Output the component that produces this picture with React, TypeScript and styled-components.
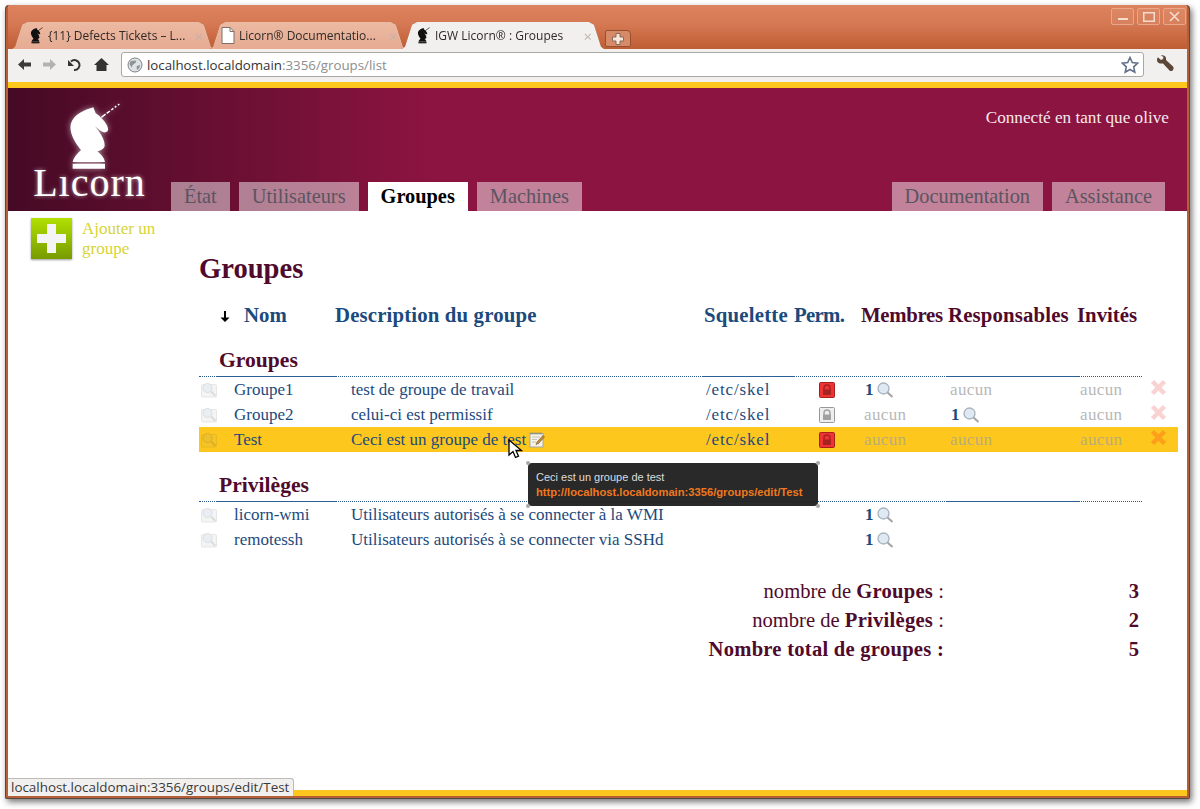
import React from "react";
import styled, { createGlobalStyle } from "styled-components";

const Global = createGlobalStyle`
  html, body { margin: 0; padding: 0; background: #fff; height: 100%; overflow: hidden; }
  body { font-family: "Liberation Serif", serif; }
`;

const SERIF = `"Liberation Serif", "Times New Roman", serif`;
const UI = `"Open Sans", "Noto Sans", sans-serif`;
const BLUE = "#1b4a7d";
const MAROON = "#4f0a2c";
const HL = "#fec71d";

const Screen = styled.div`
  width: 1200px;
  height: 809px;
  padding: 5px 10px 10px 5px;
  box-sizing: border-box;
`;
const Window = styled.div`
  position: relative;
  height: 794px;
  box-sizing: border-box;
  display: flex;
  flex-direction: column;
  border: 3px solid #b55f38;
  border-top: 0;
  border-radius: 4px 4px 2px 2px;
  outline: 1px solid #5b4a42;
  outline-offset: -1px;
  box-shadow: 2px 3px 6px rgba(0, 0, 0, 0.55);
  overflow: hidden;
`;
const TitleBar = styled.div`
  height: 44px;
  flex: none;
  display: flex;
  align-items: flex-end;
  padding-left: 4px;
  position: relative;
  background: linear-gradient(#dc825c 0%, #d67a55 40%, #bf5d34 100%);
`;
const Tab = styled.div<{ $w: number; $pad: number; $active?: boolean }>`
  position: relative;
  width: ${(p) => p.$w}px;
  height: 27px;
  margin-right: -4px;
  display: flex;
  align-items: center;
  padding: 0 0 0 ${(p) => p.$pad}px;
  box-sizing: border-box;
  font: 12px/27px ${UI};
  color: #2f2a26;
  z-index: ${(p) => (p.$active ? 2 : 1)};
  filter: drop-shadow(0 0 0.6px #7d4326);
  &::before {
    content: "";
    position: absolute;
    inset: 0;
    z-index: -1;
    background: ${(p) => (p.$active ? "#f2f0ee" : "linear-gradient(#ecb9a2, #e6ab92)")};
    clip-path: polygon(0 100%, 3px 92%, 10px 10%, 15px 0, calc(100% - 15px) 0, calc(100% - 10px) 10%, calc(100% - 3px) 92%, 100% 100%);
  }
`;
const TabText = styled.span`
  flex: 1;
  margin-left: 4px;
  white-space: nowrap;
  overflow: hidden;
`;
const TabClose = styled.span<{ $right: number }>`
  flex: none;
  padding-right: ${(p) => p.$right}px;
  color: #c4b3aa;
  font: 15px ${UI};
`;
const NewTab = styled.div`
  width: 26px;
  height: 17px;
  margin: 0 0 2px 5px;
  display: flex;
  align-items: center;
  justify-content: center;
  border-radius: 2px 4px 2px 2px;
  background: #d68a68;
  border: 1px solid #96512f;
  box-sizing: border-box;
`;
const WinButtons = styled.div`
  position: absolute;
  top: 3px;
  right: 1px;
  display: flex;
  gap: 3px;
`;
const WinButton = styled.div`
  width: 23px;
  height: 17px;
  box-sizing: border-box;
  border: 1px solid #e9a78a;
  border-radius: 2px;
  background: rgba(255, 255, 255, 0.06);
  display: flex;
  align-items: center;
  justify-content: center;
`;
const Toolbar = styled.div`
  height: 33px;
  flex: none;
  background: #f2f0ee;
  display: flex;
  align-items: flex-start;
  padding: 3px 0 0 0;
  box-sizing: border-box;
  border-radius: 3px 3px 0 0;
`;
const NavIcons = styled.div`
  width: 113px;
  flex: none;
  display: flex;
  align-items: center;
  height: 25px;
  padding-left: 10px;
  box-sizing: border-box;
  gap: 12px;
`;
const Omnibox = styled.div`
  width: 1023px;
  height: 25px;
  flex: none;
  box-sizing: border-box;
  border: 1px solid #aaa8a4;
  border-radius: 3px;
  background: #fff;
  display: flex;
  align-items: center;
  padding: 0 4px 0 5px;
  font: 13.3px ${UI};
  color: #8d8d8d;
`;
const UrlHost = styled.span`
  color: #333;
`;
const UrlText = styled.span`
  flex: 1;
  margin-left: 4px;
`;
const Wrench = styled.div`
  margin-left: 12px;
  margin-top: 3px;
`;
const YellowBar = styled.div`
  height: 6px;
  flex: none;
  background: ${HL};
`;
const Header = styled.header`
  height: 123px;
  flex: none;
  display: flex;
  background: linear-gradient(90deg, #450a25 0%, #8c1440 36%, #8c1440 100%);
`;
const Logo = styled.div`
  width: 163px;
  flex: none;
  display: flex;
  flex-direction: column;
  align-items: center;
  padding: 10px 0 0 0;
  box-sizing: border-box;
  svg { filter: drop-shadow(0 0 3px rgba(255, 255, 255, 0.55)); margin-left: 11px; }
`;
const LogoText = styled.div`
  font: 40px/32px ${SERIF};
  color: #fff;
  letter-spacing: 1px;
  margin-top: -7px;
  text-shadow: 0 0 4px rgba(255, 255, 255, 0.6);
`;
const HeaderRight = styled.div`
  flex: 1;
  display: flex;
  flex-direction: column;
  justify-content: space-between;
`;
const UserLine = styled.div`
  text-align: right;
  padding: 20px 18px 0 0;
  font: 17.2px/20px ${SERIF};
  color: #f7e8ee;
`;
const Nav = styled.nav`
  display: flex;
  justify-content: space-between;
  padding-right: 22px;
`;
const NavGroup = styled.div`
  display: flex;
  gap: 9px;
`;
const NavTab = styled.div<{ $active?: boolean }>`
  height: 29px;
  padding: 0 13px;
  font: ${(p) => (p.$active ? 700 : 400)} 20.35px/29px ${SERIF};
  color: ${(p) => (p.$active ? "#000" : "#5a5560")};
  background: ${(p) => (p.$active ? "#fff" : "rgba(255,255,255,0.47)")};
`;
const Body = styled.div`
  flex: 1;
  display: flex;
  background: #fff;
  min-height: 0;
`;
const Sidebar = styled.aside`
  width: 191px;
  flex: none;
  display: flex;
  align-items: flex-start;
  gap: 10px;
  padding: 7px 0 0 23px;
  box-sizing: border-box;
`;
const AddText = styled.div`
  font: 17px/20px ${SERIF};
  color: #d6d435;
  width: 90px;
  margin-top: 1px;
`;
const Main = styled.main`
  flex: 1;
  min-width: 0;
`;
const Title = styled.h1`
  margin: 43px 0 0 0;
  font: 700 28.6px/30px ${SERIF};
  color: ${MAROON};
`;
const HeadRow = styled.div`
  display: grid;
  grid-template-columns: 45px 91px 369px 90px 67px 87px 129px 90px;
  margin-top: 19px;
  height: 24px;
  align-items: center;
  font: 700 20.8px/24px ${SERIF};
  white-space: nowrap;
`;
const HeadCell = styled.div<{ $maroon?: boolean; $ls?: number }>`
  color: ${(p) => (p.$maroon ? MAROON : BLUE)};
  letter-spacing: ${(p) => p.$ls ?? 0}px;
  display: flex;
  align-items: center;
`;
const ArrowBox = styled.div`
  padding-left: 21px;
`;
const SectionTitle = styled.h2`
  margin: 18px 0 0 20px;
  font: 700 21.6px/30px ${SERIF};
  color: ${MAROON};
`;
const Rule = styled.div`
  display: grid;
  grid-template-columns: 18px 119px 367px 91px 153px 131px 64px;
  width: 943px;
  margin-top: 1px;
`;
const RuleCell = styled.div<{ $solid?: boolean }>`
  border-bottom: 1px ${(p) => (p.$solid ? "solid #2a6199" : "dotted #2a5a8c")};
`;
const Row = styled.div<{ $hl?: boolean }>`
  position: relative;
  display: grid;
  grid-template-columns: 35px 117px 355px 113px 45px 86px 130px 70px 28px;
  width: 979px;
  height: 25px;
  align-items: center;
  background: ${(p) => (p.$hl ? HL : "transparent")};
  font: 17px/25px ${SERIF};
  color: ${BLUE};
  white-space: nowrap;
`;
const Cell = styled.div`
  display: flex;
  align-items: center;
  gap: 3px;
  min-width: 0;
`;
const IconCell = styled(Cell)`
  padding-left: 2px;
`;
const PathCell = styled(Cell)`
  letter-spacing: 0.85px;
`;
const None = styled.span<{ $hl?: boolean }>`
  color: ${(p) => (p.$hl ? "#b9ad7a" : "#b8b8b8")};
  letter-spacing: 0.35px;
`;
const Count = styled.b`
  color: ${BLUE};
  margin-left: 1px;
`;
const Tooltip = styled.div`
  position: absolute;
  left: 329px;
  top: 36px;
  width: 290px;
  height: 43px;
  box-sizing: border-box;
  padding: 7px 8px;
  border-radius: 4px;
  background: rgba(32, 32, 32, 0.96);
  font: 11px/15px "Liberation Sans", Arial, sans-serif;
  color: #ddd;
  z-index: 5;
`;
const TooltipLink = styled.div`
  font-size: 11.2px;
  font-weight: 700;
  color: #f0781e;
`;
const Dot = styled.i<{ $x: "left" | "right"; $y: "top" | "bottom" }>`
  position: absolute;
  ${(p) => p.$x}: -2px;
  ${(p) => p.$y}: -2px;
  width: 4px;
  height: 4px;
  border-radius: 50%;
  background: #a8a8a8;
`;
const Cursor = styled.svg`
  position: absolute;
  left: 309px;
  top: 12px;
  z-index: 6;
`;
const Stats = styled.div`
  display: grid;
  grid-template-columns: 745px 195px;
  margin-top: 25px;
  font: 20.6px/29px ${SERIF};
  color: ${MAROON};
  b { letter-spacing: 0.25px; }
`;
const StatLabel = styled.div`
  text-align: right;
`;
const StatValue = styled.div`
  text-align: right;
  font-weight: 700;
`;
const StatusBubble = styled.div`
  position: absolute;
  left: 0;
  bottom: 0;
  height: 17px;
  padding: 0 4px 0 3px;
  background: #f2f0ee;
  border-top: 1px solid #bdbbb8;
  border-right: 1px solid #bdbbb8;
  border-radius: 0 3px 0 0;
  font: 13.4px/17px ${UI};
  color: #3a3a3a;
  z-index: 7;
`;
const BottomBar = styled.div`
  height: 6px;
  flex: none;
  background: ${HL};
`;

const KNIGHT =
  "M100 28 C78 34 42 48 33 76 C26 100 42 130 63 156 C50 168 40 180 38 192 L135 192 C133 180 124 170 112 160 C122 158 134 152 134 142 C134 122 118 100 104 84 C114 92 128 106 137 103 C146 100 146 92 140 80 C132 68 122 56 107 46 Z";
const BASE = "M38 197 H135 V212 H38 Z";

const Knight = () => (
  <svg width="14" height="17" viewBox="25 15 160 205" style={{ flex: "none" }}>
    <path d={KNIGHT} fill="#111" />
    <path d={BASE} fill="#111" />
    <path d="M122 58 L172 22" stroke="#111" strokeWidth="8" />
  </svg>
);

const LogoKnight = () => (
  <svg width="70" height="76" viewBox="0 0 210 228">
    <path d={KNIGHT} fill="#fff" />
    <path d={BASE} fill="#fff" />
    <path d="M124 58 L178 18" stroke="#fff" strokeWidth="4.500" strokeDasharray="16 4 12 5 8 5 6 6" />
  </svg>
);

const PageIcon = () => (
  <svg width="14" height="17" viewBox="0 0 14 17" style={{ flex: "none" }}>
    <path d="M1 .5h8l4 4v12H1z" fill="#fff" stroke="#7a7068" />
    <path d="M9 .5v4h4" fill="none" stroke="#7a7068" />
  </svg>
);

const Back = () => (
  <svg width="13" height="11" viewBox="0 0 13 11">
    <path d="M0 5.500L6 0v3.500h7v4H6V11z" fill="#3a3a3a" />
  </svg>
);
const Forward = () => (
  <svg width="13" height="11" viewBox="0 0 13 11">
    <path d="M13 5.500L7 0v3.500H0v4h7V11z" fill="#b4b2ae" />
  </svg>
);
const Reload = () => (
  <svg width="14" height="14" viewBox="0 0 14 14" fill="none">
    <path d="M3 3.500A5 5 0 1 1 6 12" stroke="#333" strokeWidth="2" />
    <path d="M0 2v6h6z" fill="#333" />
  </svg>
);
const Home = () => (
  <svg width="15" height="13" viewBox="0 0 15 13">
    <path d="M7.500 0l7.500 7h-2.500v6h-10V7H0z" fill="#333" />
  </svg>
);
const Globe = () => (
  <svg width="16" height="16" viewBox="0 0 16 16" style={{ flex: "none" }}>
    <circle cx="8" cy="8" r="7" fill="#dfe3e4" stroke="#7d8385" />
    <path d="M4 4c2 0 4-1 5 0s-1 2-2 3-2 1-2 3-1-1-2-2 0-3 1-4zM10 9l3-1c0 2-1 4-3 5 0-2-1-3 0-4z" fill="#8d9496" />
  </svg>
);
const Star = () => (
  <svg width="18" height="18" viewBox="0 0 18 18">
    <path d="M9 1.500l2.300 5 5.400.6-4 3.700 1.100 5.400L9 13.500l-4.800 2.700 1.100-5.400-4-3.700 5.400-.6z" fill="#fff" stroke="#63708a" strokeWidth="1.600" />
  </svg>
);
const WrenchIcon = () => (
  <svg width="18" height="18" viewBox="0 0 18 18">
    <path d="M1 5c0-1 .3-2 .8-2.700L5 5l2-1 .5-2L5 .5C7-.3 9.500 .8 10 3c.2 1 0 1.500 0 2l7 6.500c1 1.200.5 2.500 0 3.500s-2.500 1.500-3.500.5L7 8.500C4 9 1 8 1 5z" fill="#5b4638" />
  </svg>
);
const Plus = () => (
  <svg width="41" height="41" viewBox="0 0 41 41" style={{ flex: "none", filter: "drop-shadow(0 1px 1px rgba(0,0,0,.4))" }}>
    <defs>
      <linearGradient id="pg" x1="0" y1="0" x2="0" y2="1">
        <stop offset="0" stopColor="#b2e000" />
        <stop offset="1" stopColor="#779a00" />
      </linearGradient>
    </defs>
    <rect width="41" height="41" fill="url(#pg)" />
    <path d="M16 6h9v10h10v9H25v10h-9V25H6v-9h10z" fill="#f4f4f4" />
  </svg>
);
const DownArrow = () => (
  <svg width="10" height="11" viewBox="0 0 10 11">
    <path d="M4 0h2v6.500h3.500L5 11 .5 6.500H4z" fill="#000" />
  </svg>
);
const GroupIcon = ({ hl }: { hl?: boolean }) => (
  <svg width="16" height="16" viewBox="0 0 16 16" style={{ flex: "none" }}>
    <rect x=".5" y="2.500" width="15" height="12.500" rx="1" fill={hl ? "#f4c326" : "#f4f4f4"} stroke={hl ? "#e8b920" : "#e6e6e6"} />
    <circle cx="6.500" cy="6" r="4.500" fill={hl ? "#edc030" : "#e9eef4"} stroke={hl ? "#dcae24" : "#dcdfe2"} />
    <path d="M10 9.500l4.500 4.500" stroke={hl ? "#dcae24" : "#dcdcdc"} strokeWidth="2" />
  </svg>
);
const Lens = () => (
  <svg width="17" height="16" viewBox="0 0 17 16" style={{ flex: "none" }}>
    <circle cx="6.500" cy="6.500" r="5.500" fill="#dfe9f3" stroke="#a8b2bb" strokeWidth="1.300" />
    <path d="M10.500 10.500l5 4.500" stroke="#a6a6a6" strokeWidth="2.200" />
  </svg>
);
const Lock = ({ red }: { red?: boolean }) => (
  <svg width="16" height="16" viewBox="0 0 16 16" style={{ flex: "none" }}>
    <rect x=".5" y=".5" width="15" height="15" rx="1" fill={red ? "#ee3333" : "#eeeeee"} stroke={red ? "#a81e1e" : "#999"} />
    <path d="M5 8V6a3 3 0 0 1 6 0v2" fill="none" stroke={red ? "#a82222" : "#a0a0a0"} strokeWidth="1.400" />
    <rect x="4" y="7.500" width="8" height="5.500" rx=".5" fill={red ? "#a82222" : "#a0a0a0"} />
  </svg>
);
const Del = ({ hl }: { hl?: boolean }) => (
  <svg width="17" height="17" viewBox="0 0 17 17" style={{ marginTop: -5 }}>
    <path d="M2.500 2.500l12 12M14.500 2.500l-12 12" stroke={hl ? "#ff9e1a" : "#fbd2d2"} strokeWidth="4.500" />
  </svg>
);
const EditIcon = () => (
  <svg width="16" height="16" viewBox="0 0 16 16" style={{ flex: "none" }}>
    <rect x="1" y="1.500" width="13" height="13.500" fill="#f6f3e6" stroke="#a8a8a0" />
    <path d="M1.500 1.500h12" stroke="#7c7c78" strokeDasharray="1 1" strokeWidth="2" />
    <path d="M3 5h8M3 7.500h5M3 10h4" stroke="#c4c4bc" />
    <path d="M14 3.500l1.500 1.500-6 6.500-2.500 1 1-2.500z" fill="#c98a30" stroke="#6d5a30" strokeWidth=".6" />
  </svg>
);

const SectionRule = () => (
  <Rule>
    <RuleCell />
    <RuleCell $solid />
    <RuleCell />
    <RuleCell $solid />
    <RuleCell />
    <RuleCell $solid />
    <RuleCell />
  </Rule>
);

const Members = ({ value, hl }: { value: number | null; hl?: boolean }) =>
  value === null ? (
    <None $hl={hl}>aucun</None>
  ) : (
    <>
      <Count>{value}</Count>
      <Lens />
    </>
  );

export default function App() {
  return (
    <Screen>
      <Global />
      <Window>
        <TitleBar>
          <Tab $w={202} $pad={18}>
            <Knight />
            <TabText>{"{11} Defects Tickets – L..."}</TabText>
            <TabClose $right={11}>×</TabClose>
          </Tab>
          <Tab $w={196} $pad={11}>
            <PageIcon />
            <TabText>Licorn® Documentatio...</TabText>
            <TabClose $right={9}>×</TabClose>
          </Tab>
          <Tab $w={202} $pad={15} $active>
            <Knight />
            <TabText>IGW Licorn® : Groupes</TabText>
            <TabClose $right={12}>×</TabClose>
          </Tab>
          <NewTab>
            <svg width="12" height="12" viewBox="0 0 12 12">
              <path d="M4 .5h4v3.500h3.500v4H8v3.500H4V8H.5V4H4z" fill="#f6e6dc" stroke="#8a6a5a" />
            </svg>
          </NewTab>
          <WinButtons>
            <WinButton>
              <svg width="10" height="10" viewBox="0 0 10 10">
                <rect x="0" y="6" width="10" height="2" fill="#f4dccf" />
              </svg>
            </WinButton>
            <WinButton>
              <svg width="12" height="10" viewBox="0 0 12 10">
                <rect x=".75" y=".75" width="10.500" height="8.500" fill="none" stroke="#f4dccf" strokeWidth="1.500" />
              </svg>
            </WinButton>
            <WinButton>
              <svg width="11" height="11" viewBox="0 0 11 11">
                <path d="M1 1l9 9M10 1l-9 9" stroke="#f4dccf" strokeWidth="1.600" />
              </svg>
            </WinButton>
          </WinButtons>
        </TitleBar>
        <Toolbar>
          <NavIcons>
            <Back />
            <Forward />
            <Reload />
            <Home />
          </NavIcons>
          <Omnibox>
            <Globe />
            <UrlText>
              <UrlHost>localhost.localdomain</UrlHost>:3356/groups/list
            </UrlText>
            <Star />
          </Omnibox>
          <Wrench>
            <WrenchIcon />
          </Wrench>
        </Toolbar>
        <YellowBar />
        <Header>
          <Logo>
            <LogoKnight />
            <LogoText>Lıcorn</LogoText>
          </Logo>
          <HeaderRight>
            <UserLine>Connecté en tant que olive</UserLine>
            <Nav>
              <NavGroup>
                <NavTab>État</NavTab>
                <NavTab>Utilisateurs</NavTab>
                <NavTab $active>Groupes</NavTab>
                <NavTab>Machines</NavTab>
              </NavGroup>
              <NavGroup>
                <NavTab>Documentation</NavTab>
                <NavTab>Assistance</NavTab>
              </NavGroup>
            </Nav>
          </HeaderRight>
        </Header>
        <Body>
          <Sidebar>
            <Plus />
            <AddText>Ajouter un groupe</AddText>
          </Sidebar>
          <Main>
            <Title>Groupes</Title>
            <HeadRow>
              <ArrowBox>
                <DownArrow />
              </ArrowBox>
              <HeadCell>Nom</HeadCell>
              <HeadCell $ls={0.15}>Description du groupe</HeadCell>
              <HeadCell $ls={0.2}>Squelette</HeadCell>
              <HeadCell $ls={-0.7}>Perm.</HeadCell>
              <HeadCell $maroon $ls={-0.3}>Membres</HeadCell>
              <HeadCell $maroon $ls={0.15}>Responsables</HeadCell>
              <HeadCell $maroon>Invités</HeadCell>
            </HeadRow>

            <SectionTitle>Groupes</SectionTitle>
            <SectionRule />
            <Row>
              <IconCell><GroupIcon /></IconCell>
              <Cell>Groupe1</Cell>
              <Cell>test de groupe de travail</Cell>
              <PathCell>/etc/skel</PathCell>
              <Cell><Lock red /></Cell>
              <Cell><Members value={1} /></Cell>
              <Cell><Members value={null} /></Cell>
              <Cell><None>aucun</None></Cell>
              <Cell><Del /></Cell>
            </Row>
            <Row>
              <IconCell><GroupIcon /></IconCell>
              <Cell>Groupe2</Cell>
              <Cell>celui-ci est permissif</Cell>
              <PathCell>/etc/skel</PathCell>
              <Cell><Lock /></Cell>
              <Cell><Members value={null} /></Cell>
              <Cell><Members value={1} /></Cell>
              <Cell><None>aucun</None></Cell>
              <Cell><Del /></Cell>
            </Row>
            <Row $hl>
              <IconCell><GroupIcon hl /></IconCell>
              <Cell>Test</Cell>
              <Cell>Ceci est un groupe de test<EditIcon /></Cell>
              <PathCell>/etc/skel</PathCell>
              <Cell><Lock red /></Cell>
              <Cell><Members value={null} hl /></Cell>
              <Cell><Members value={null} hl /></Cell>
              <Cell><None $hl>aucun</None></Cell>
              <Cell><Del hl /></Cell>
              <Cursor width="15" height="20" viewBox="0 0 15 20">
                <path d="M1 1v15l4-3.500 2.500 6 3-1.300-2.500-5.700h5.500z" fill="#fff" stroke="#000" strokeWidth="1.300" />
              </Cursor>
              <Tooltip>
                <Dot $x="left" $y="top" />
                <Dot $x="right" $y="top" />
                <Dot $x="left" $y="bottom" />
                <Dot $x="right" $y="bottom" />
                Ceci est un groupe de test
                <TooltipLink>http://localhost.localdomain:3356/groups/edit/Test</TooltipLink>
              </Tooltip>
            </Row>

            <SectionTitle>Privilèges</SectionTitle>
            <SectionRule />
            <Row>
              <IconCell><GroupIcon /></IconCell>
              <Cell>licorn-wmi</Cell>
              <Cell>Utilisateurs autorisés à se connecter à la WMI</Cell>
              <Cell />
              <Cell />
              <Cell><Members value={1} /></Cell>
            </Row>
            <Row>
              <IconCell><GroupIcon /></IconCell>
              <Cell>remotessh</Cell>
              <Cell>Utilisateurs autorisés à se connecter via SSHd</Cell>
              <Cell />
              <Cell />
              <Cell><Members value={1} /></Cell>
            </Row>

            <Stats>
              <StatLabel>nombre de <b>Groupes</b> :</StatLabel>
              <StatValue>3</StatValue>
              <StatLabel>nombre de <b>Privilèges</b> :</StatLabel>
              <StatValue>2</StatValue>
              <StatLabel><b>Nombre total de groupes :</b></StatLabel>
              <StatValue>5</StatValue>
            </Stats>
          </Main>
        </Body>
        <BottomBar />
        <StatusBubble>localhost.localdomain:3356/groups/edit/Test</StatusBubble>
      </Window>
    </Screen>
  );
}
